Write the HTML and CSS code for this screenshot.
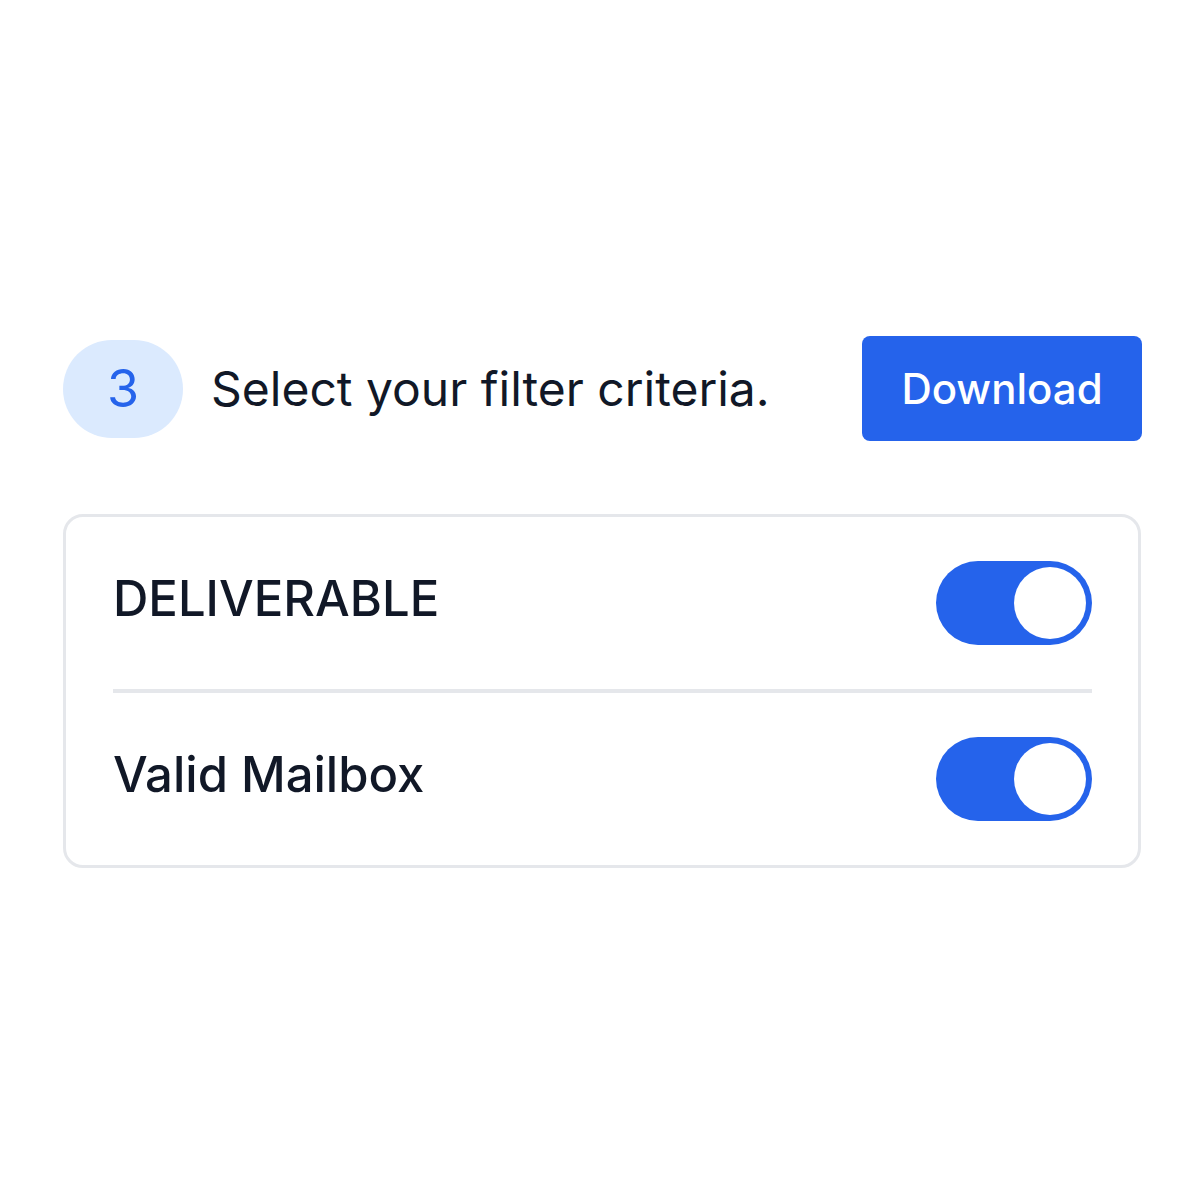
FILE: index.html
```html
<!DOCTYPE html>
<html lang="en">
<head>
    <meta charset="UTF-8">
    <title>Filter criteria</title>
    <link rel="stylesheet" href="styles.css">
</head>
<body>
    <div class="panel">
        <div class="step-row">
            <div class="step">
                <span class="step-num">3</span>
                <span class="step-text">Select your filter criteria.</span>
            </div>
            <button type="button" class="download-btn">Download</button>
        </div>

        <div class="filters">
            <div class="filter-row">
                <span class="filter-label">DELIVERABLE</span>
                <label class="toggle">
                    <input type="checkbox" checked>
                    <span class="knob"></span>
                </label>
            </div>
            <div class="filter-row">
                <span class="filter-label">Valid Mailbox</span>
                <label class="toggle">
                    <input type="checkbox" checked>
                    <span class="knob"></span>
                </label>
            </div>
        </div>
    </div>
</body>
</html>
```

FILE: styles.css
```css
body {
    margin: 0;
    padding: 0;
    background: #fff;
    font-family: Inter, "Noto Sans", sans-serif;
    color: #111827;
}

.panel {
    width: 1078px;
    margin: 336px 0 0 63px;
}

.step-row {
    display: flex;
    align-items: center;
    justify-content: space-between;
}

.step {
    display: flex;
    align-items: center;
    gap: 28px;
}

.step-num {
    width: 120px;
    height: 98px;
    border-radius: 49px;
    background: #dbeafe;
    color: #2563eb;
    font-size: 52px;
    display: flex;
    align-items: center;
    justify-content: center;
}

.step-text {
    font-size: 48px;
    color: #111827;
}

.download-btn {
    width: 280px;
    height: 105px;
    margin-right: -1px;
    background: #2563eb;
    color: #fff;
    border: none;
    border-radius: 8px;
    font-family: inherit;
    font-size: 42px;
    font-weight: 500;
    cursor: pointer;
}

.filters {
    margin-top: 73px;
    border: 3px solid #e5e7eb;
    border-radius: 20px;
    padding: 0 46px 0 47px;
}

.filter-row {
    height: 172px;
    display: flex;
    align-items: center;
    justify-content: space-between;
}

.filter-row + .filter-row {
    border-top: 4px solid #e5e7eb;
}

.filter-label {
    font-size: 49px;
    font-weight: 500;
    margin-top: -10px;
}

.toggle {
    position: relative;
    width: 156px;
    height: 84px;
}

.toggle input {
    display: none;
}

.knob {
    position: absolute;
    inset: 0;
    border-radius: 42px;
    background: #2563eb;
}

.knob::after {
    content: "";
    position: absolute;
    top: 6px;
    right: 6px;
    width: 72px;
    height: 72px;
    border-radius: 50%;
    background: #fff;
}
```
